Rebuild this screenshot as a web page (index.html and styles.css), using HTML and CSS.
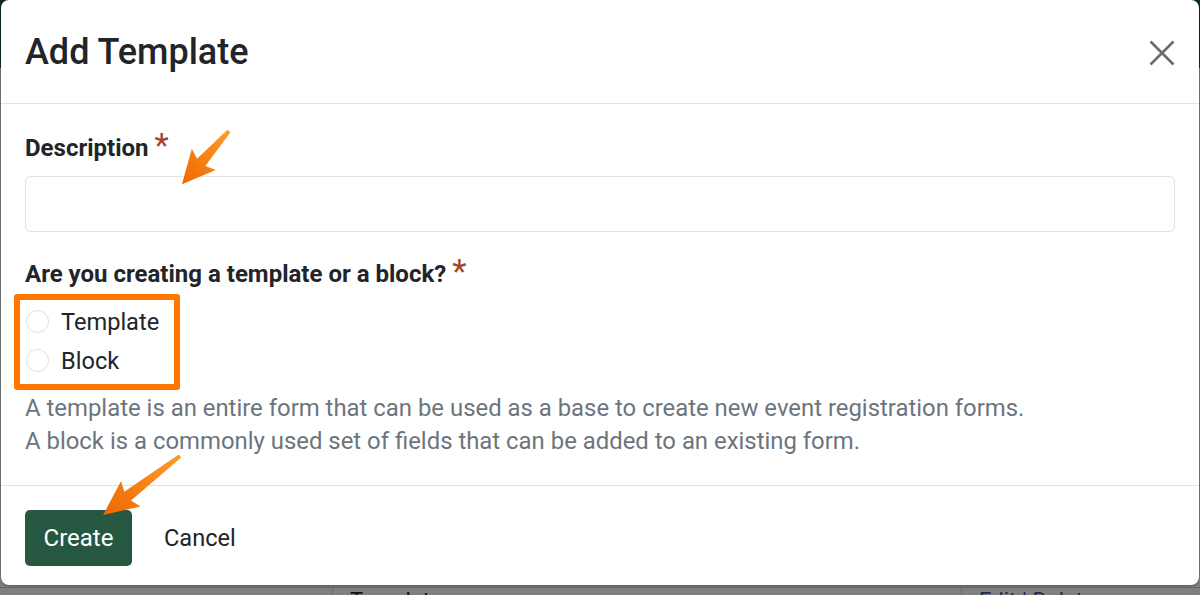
FILE: index.html
```html
<!DOCTYPE html>
<html lang="en">
<head>
<meta charset="utf-8">
<title>Add Template</title>
<link rel="stylesheet" href="styles.css">
</head>
<body>
<div class="page">
  <div class="page-header"></div>
  <div class="page-table">
    <div class="cell cell-a"></div>
    <div class="cell cell-b">Template</div>
    <div class="cell cell-c"><span class="link">Edit</span> | <span class="link">Delete</span></div>
  </div>
</div>

<div class="modal">
  <div class="modal-header">
    <h5 class="modal-title">Add Template</h5>
    <button class="close" aria-label="Close">
      <svg width="26" height="26" viewBox="0 0 26 26"><path d="M1.5 1.5 L24.5 24.5 M24.5 1.5 L1.5 24.5" stroke="#6c6c6c" stroke-width="2.6" fill="none"/></svg>
    </button>
  </div>
  <div class="modal-body">
    <label class="field-label">Description <span class="req">*</span></label>
    <input class="form-control" type="text">
    <label class="field-label second">Are you creating a template or a block? <span class="req">*</span></label>
    <div class="radios">
      <label class="radio"><span class="circle"></span>Template</label>
      <label class="radio"><span class="circle"></span>Block</label>
    </div>
    <div class="help">
      <div>A template is an entire form that can be used as a base to create new event registration forms.</div>
      <div>A block is a commonly used set of fields that can be added to an existing form.</div>
    </div>
  </div>
  <div class="modal-footer">
    <button class="btn-create">Create</button>
    <button class="btn-cancel">Cancel</button>
  </div>
</div>

<div class="highlight"></div>
<svg class="annot" width="1200" height="595" viewBox="0 0 1200 595">
  <defs>
    <linearGradient id="og" x1="0" y1="0" x2="1" y2="0">
      <stop offset="0" stop-color="#ff9a2a"/>
      <stop offset="1" stop-color="#ef6800"/>
    </linearGradient>
  </defs>
  <g transform="translate(229 131) rotate(131.5)">
    <polygon points="0,-2 42,-5.5 38,-16 71,0 38,16 42,5.5 0,2" fill="url(#og)"/>
  </g>
  <g transform="translate(180 456) rotate(142.5)">
    <polygon points="0,-2 66,-5.5 62,-16 97,0 62,16 66,5.5 0,2" fill="url(#og)"/>
  </g>
</svg>
</body>
</html>
```

FILE: styles.css
```css
* { box-sizing: border-box; }
html, body { margin: 0; padding: 0; }
body {
  width: 1200px;
  height: 595px;
  overflow: hidden;
  position: relative;
  background: #808080;
  font-family: Roboto, "Liberation Sans", Arial, sans-serif;
  color: #212529;
}
.page { width: 1200px; height: 595px; display: flex; flex-direction: column; }
.page-header { height: 68px; background: #0e2a22; }
.page-table {
  margin-top: auto;
  height: 8px;
  display: flex;
  border-top: 1px solid #6a6a6a;
  font-size: 22px;
  line-height: 22px;
  overflow: visible;
}
.cell { padding-left: 17px; white-space: nowrap; color: #111; padding-top: 2px; }
.cell-a { width: 332px; padding: 0; }
.cell-b { width: 629px; border-left: 1px solid #6a6a6a; }
.cell-c { border-left: 1px solid #6a6a6a; color: #1a2d4f; }

.modal {
  position: absolute;
  left: 1px;
  top: 0;
  width: 1198px;
  height: 585px;
  background: #fff;
  border-radius: 8px;
  box-shadow: 0 1px 3px rgba(0,0,0,0.35);
  display: flex;
  flex-direction: column;
}
.modal-header {
  height: 104px;
  padding: 2px 24px 0;
  display: flex;
  align-items: center;
  justify-content: space-between;
  border-bottom: 1px solid #dee2e6;
}
.modal-title {
  margin: 0;
  font-size: 36px;
  font-weight: 500;
  line-height: 1.2;
  color: #212529;
}
.close {
  border: 0;
  background: none;
  padding: 0;
  margin-right: 0;
  width: 26px;
  height: 26px;
  display: flex;
}
.modal-body {
  padding: 26px 24px 26px;
  display: flex;
  flex-direction: column;
}
.field-label {
  font-size: 24px;
  font-weight: 700;
  line-height: 36px;
  color: #212529;
}
.req {
  color: #a4432a;
  font-size: 33px;
  font-weight: 400;
  line-height: 20px;
  position: relative;
  top: 1px;
}
.form-control {
  margin-top: 10px;
  width: 100%;
  height: 56px;
  border: 1px solid #dee2e6;
  border-radius: 6px;
  font-size: 22px;
  padding: 0 14px;
}
.field-label.second { margin-top: 24px; }
.radios {
  margin-top: 10px;
  display: flex;
  flex-direction: column;
}
.radio {
  display: flex;
  align-items: center;
  height: 39px;
  font-size: 23.6px;
  color: #212529;
}
.circle {
  width: 23px;
  height: 23px;
  border: 1px solid #dee2e6;
  border-radius: 50%;
  margin-left: 1px;
  margin-right: 12px;
}
.help {
  margin-top: 12px;
  font-size: 23.9px;
  line-height: 33px;
  color: #6c757d;
}
.modal-footer {
  margin-top: auto;
  border-top: 1px solid #dee2e6;
  padding: 24px 24px 19px;
  display: flex;
  align-items: center;
  gap: 32px;
}
.btn-create {
  width: 107px;
  height: 56px;
  border: 0;
  border-radius: 5px;
  background: #265741;
  color: #fff;
  font-family: inherit;
  font-size: 24px;
  padding: 0;
}
.btn-cancel {
  border: 0;
  background: none;
  font-family: inherit;
  font-size: 23.6px;
  color: #212529;
  padding: 0;
}
.highlight {
  position: absolute;
  left: 14px;
  top: 294px;
  width: 166px;
  height: 96px;
  border: 6px solid #ff7700;
  border-radius: 3px;
}
.annot { position: absolute; left: 0; top: 0; pointer-events: none; }
```
